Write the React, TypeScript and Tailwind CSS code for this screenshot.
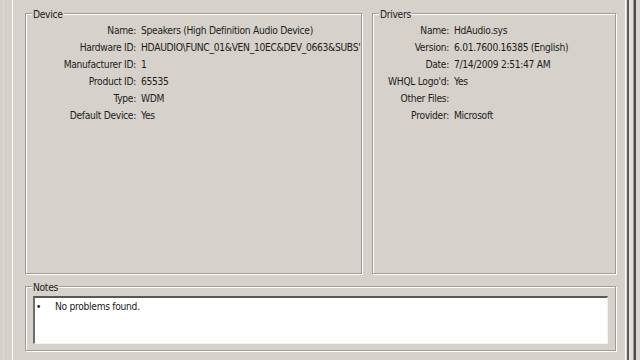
import React from 'react';

interface Row {
  label: string;
  value: string;
}

const deviceRows: Row[] = [
  { label: 'Name:', value: 'Speakers (High Definition Audio Device)' },
  { label: 'Hardware ID:', value: "HDAUDIO\\FUNC_01&VEN_10EC&DEV_0663&SUBS'" },
  { label: 'Manufacturer ID:', value: '1' },
  { label: 'Product ID:', value: '65535' },
  { label: 'Type:', value: 'WDM' },
  { label: 'Default Device:', value: 'Yes' },
];

const driverRows: Row[] = [
  { label: 'Name:', value: 'HdAudio.sys' },
  { label: 'Version:', value: '6.01.7600.16385 (English)' },
  { label: 'Date:', value: '7/14/2009 2:51:47 AM' },
  { label: 'WHQL Logo\'d:', value: 'Yes' },
  { label: 'Other Files:', value: '' },
  { label: 'Provider:', value: 'Microsoft' },
];

function GroupBox({
  title,
  className,
  children,
}: {
  title: string;
  className?: string;
  children?: React.ReactNode;
}) {
  return (
    <div
      className={`relative border border-[#a09d96] shadow-[inset_1px_1px_0_#ffffff,1px_1px_0_#ffffff] ${className ?? ''}`}
    >
      <span className="absolute left-[6px] top-[-6px] bg-[#d6d2cb] px-[1px] leading-[13px]">
        {title}
      </span>
      {children}
    </div>
  );
}

function InfoRows({ rows, labelWidth }: { rows: Row[]; labelWidth: string }) {
  return (
    <div className="flex flex-col pt-[8px]">
      {rows.map((row) => (
        <div key={row.label} className="flex h-[17px] items-center">
          <span className={`${labelWidth} shrink-0 text-right`}>{row.label}</span>
          <span className="ml-[5px] whitespace-nowrap">{row.value}</span>
        </div>
      ))}
    </div>
  );
}

export default function App() {
  return (
    <div
      className="flex h-[360px] w-[640px] overflow-hidden bg-[#d6d2cb] text-[10.2px] tracking-[-0.3px] text-[#1c1c1c]"
      style={{ fontFamily: '"DejaVu Sans Condensed", "Liberation Sans", Arial, sans-serif' }}
    >
      <div className="w-[12px] shrink-0">
        <div className="ml-[3px] h-full w-px bg-[#dcd9d3]" />
      </div>
      <div className="flex w-[614px] shrink-0 flex-col border-x border-white pb-[9px] pl-[12px] pr-[9px] pt-[13px]">
        <div className="flex h-[261px] gap-[10px]">
          <GroupBox title="Device" className="w-[337px]">
            <InfoRows rows={deviceRows} labelWidth="w-[110px]" />
          </GroupBox>
          <GroupBox title="Drivers" className="flex-1">
            <InfoRows rows={driverRows} labelWidth="w-[76px]" />
          </GroupBox>
        </div>
        <GroupBox title="Notes" className="mt-[12px] h-[65px]">
          <div className="mx-[7px] mt-[9px] h-[48px] border-l-2 border-t-2 border-b border-r border-l-[#6e6c68] border-t-[#5a5855] border-b-[#f4f3f0] border-r-[#f4f3f0] bg-white">
            <div className="flex items-center pl-[1px] pt-[2px] leading-[14px]">
              <span className="w-[19px] text-[10px]">•</span>
              <span>No problems found.</span>
            </div>
          </div>
        </GroupBox>
      </div>
      <div className="flex flex-1 bg-[#d9d6d0]">
        <div className="ml-px w-[2px] bg-[#5e5c59]" />
        <div className="w-[4px] bg-[#e3e0db]" />
        <div className="w-px bg-[#9b9893]" />
        <div className="w-[2px] bg-[#4f4d4a]" />
      </div>
    </div>
  );
}
